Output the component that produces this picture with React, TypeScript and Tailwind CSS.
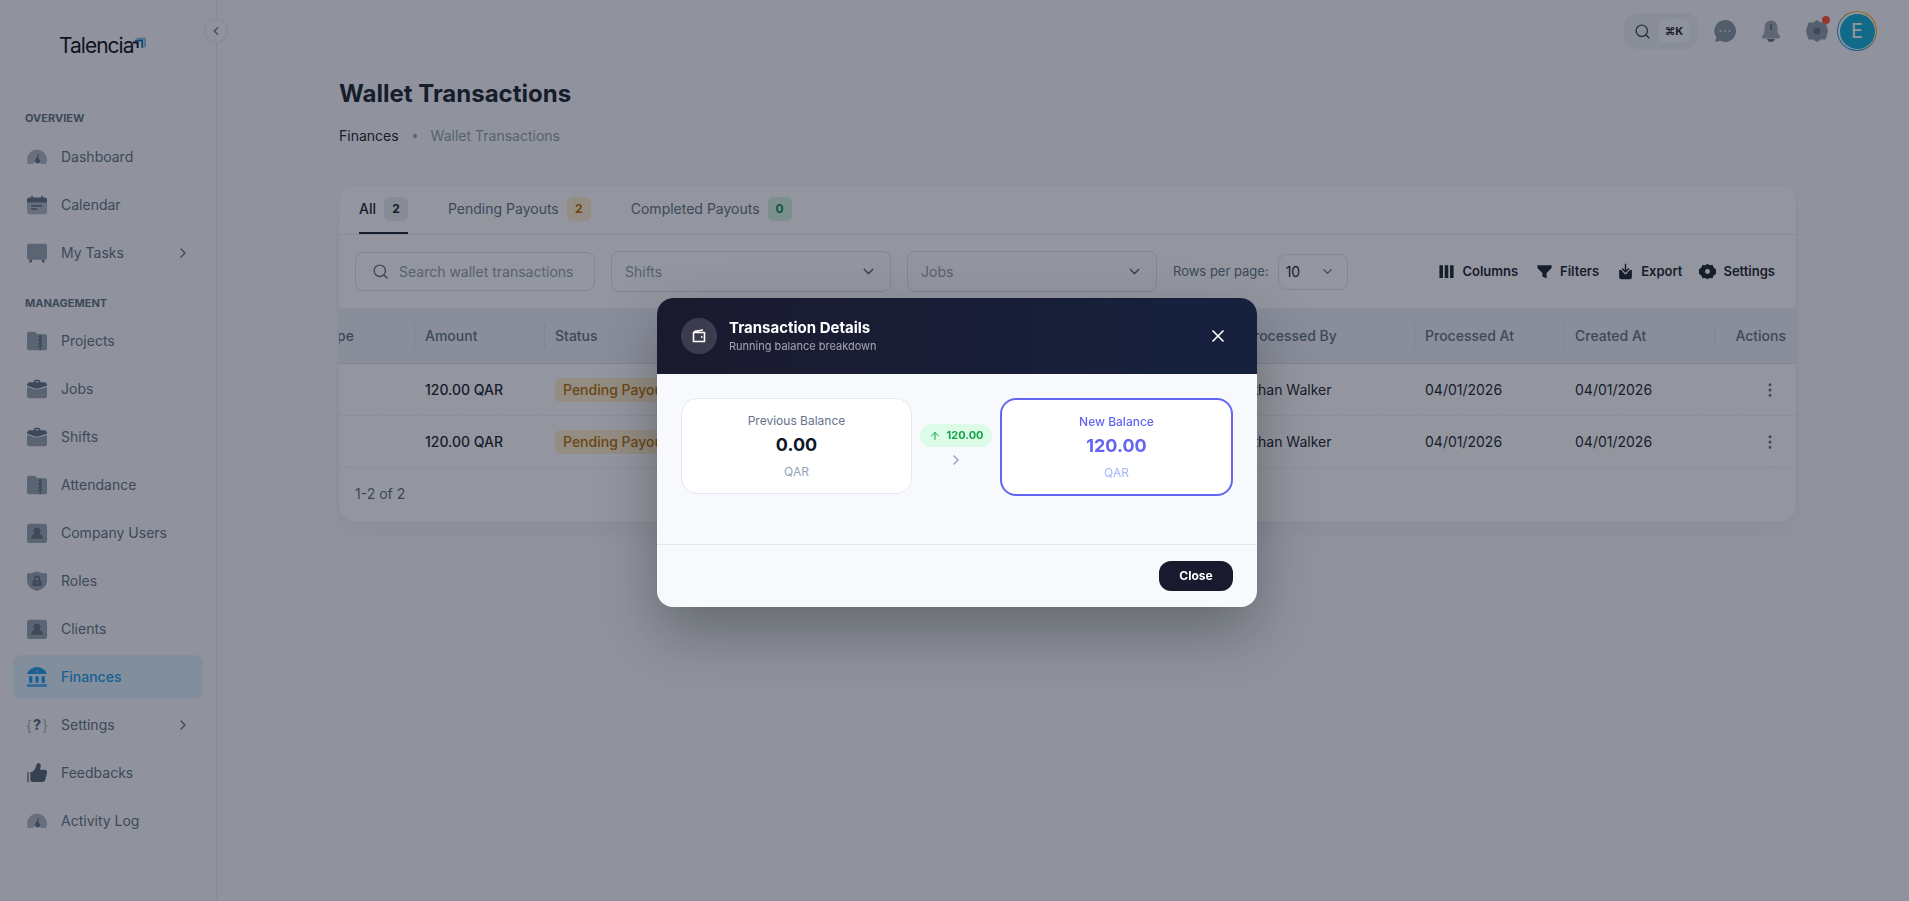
import type { ReactNode } from 'react';
import { ArrowUp, ChevronDown, ChevronLeft, ChevronRight, EllipsisVertical, Search, X } from 'lucide-react';

const Icon = ({ children, className = 'text-[#637381]' }: { children: ReactNode; className?: string }) => (
  <svg viewBox="0 0 24 24" fill="currentColor" className={`h-5 w-5 shrink-0 ${className}`}>{children}</svg>
);

const Gauge = () => (
  <Icon>
    <path opacity=".48" d="M12 3a12 12 0 0 0-12 12c0 2 .6 4 1.4 5.4h6.2a4.5 4.5 0 0 1 8.8 0h6.2A12 12 0 0 0 24 15 12 12 0 0 0 12 3Z" />
    <path d="M14.4 6.5 13.6 14a3 3 0 1 1-3.6 1.6Z" />
  </Icon>
);
const Calendar = () => (
  <Icon>
    <path opacity=".48" d="M0 8h24v12a3 3 0 0 1-3 3H3a3 3 0 0 1-3-3Z" />
    <path d="M3 3h2V1h2v2h10V1h2v2h2a3 3 0 0 1 3 3v3H0V6a3 3 0 0 1 3-3ZM5 12h13v2H5Zm0 4h7v2H5Z" />
  </Icon>
);
const Board = () => (
  <Icon>
    <path opacity=".64" d="M2 1h20a2 2 0 0 1 2 2v15a2 2 0 0 1-2 2H2a2 2 0 0 1-2-2V3a2 2 0 0 1 2-2Z" />
    <path d="M3.5 20h3l-1 3.5h-3Zm14 0h3l1 3.5h-3Z" />
  </Icon>
);
const Folder = () => (
  <Icon>
    <path opacity=".64" d="M2 1h6c2 0 3 2 5 3h9a2 2 0 0 1 2 2v15a2 2 0 0 1-2 2H2a2 2 0 0 1-2-2V3a2 2 0 0 1 2-2Z" />
    <path d="M15 4h1.6v2h1.4v1.6h-1.4v2H18v1.6h-1.4v2H18v1.6h-1.4v2H18v1.6h-1.4V23H15v-3.6h-1.4v-1.6H15v-2h-1.4v-1.6H15v-2h-1.4V9.6H15v-2h-1.4V6H15Z" />
  </Icon>
);
const Briefcase = () => (
  <Icon>
    <path opacity=".64" d="M0 9.5 12 13l12-3.500V20a3 3 0 0 1-3 3H3a3 3 0 0 1-3-3Z" />
    <path d="M8 3.500C8 2 9 1 10.500 1h3C15 1 16 2 16 3.500V4h4c2.500 0 4 1.500 4 3.500v.5l-12 4L0 8v-.5C0 5.500 1.500 4 4 4h4Zm2 .5h4v-.5a.7.7 0 0 0-.7-.7h-2.600a.7.7 0 0 0-.7.7Z" />
  </Icon>
);
const User = () => (
  <Icon>
    <rect opacity=".64" y="1" width="24" height="23" rx="3" />
    <path d="M12 5.500a4.200 4.200 0 0 1 2.800 7.400c2.700.8 4.200 3 4.200 6.100H5c0-3.100 1.500-5.300 4.200-6.100A4.200 4.200 0 0 1 12 5.500Z" />
  </Icon>
);
const Shield = () => (
  <Icon>
    <path opacity=".64" d="M0 3c8 0 8-2 12-2s4 2 12 2v9c0 6-6 10.500-12 12C6 22.500 0 18 0 12Z" />
    <path d="M12 5.500a3.800 3.800 0 0 1 3.800 3.800V11h.6a1 1 0 0 1 1 1v5a1 1 0 0 1-1 1H7.600a1 1 0 0 1-1-1v-5a1 1 0 0 1 1-1h.6V9.300A3.800 3.800 0 0 1 12 5.500Zm-1.800 5.500h3.600V9.300a1.800 1.800 0 0 0-3.600 0ZM12 13a1.200 1.200 0 1 0 0 2.400 1.200 1.200 0 0 0 0-2.400Z" />
  </Icon>
);
const Bank = () => (
  <Icon className="text-[#1b9df0]">
    <path d="M12 0c4.500 0 8.500 2.500 11.500 7v1.500H.5V7C3.500 2.500 7.500 0 12 0Z" />
    <path opacity=".72" d="M0 20.500h24V24H0Z" />
    <path d="M2.500 11h4v8h-4Zm7.500 0h4v8h-4Zm7.500 0h4v8h-4Z" />
    <circle cx="12" cy="5" r="1.800" fill="#8fa9c4" />
  </Icon>
);
const Thumb = () => (
  <Icon className="text-[#546372]">
    <path opacity=".64" d="M0 11h2.500v12H0Z" />
    <path d="M4 11c3 0 5.500-3 6.500-6 .6-2 .7-4 2.300-4.800 2-.8 3.700 1 3.700 3.300 0 1.700-.7 3.200-1 4.500h5.500c2.500 0 3.500 1.800 3 3.800l-2 8c-.5 2-1.700 3-3.700 3H7c-1.800 0-3-1-3-3Z" />
  </Icon>
);
const Braces = () => (
  <span className="flex h-5 w-5 shrink-0 items-center justify-center gap-[1px] text-[15px] leading-none text-[#637381]">
    <span className="font-light opacity-70">{'{'}</span>
    <span className="font-extrabold text-[14px]">?</span>
    <span className="font-light opacity-70">{'}'}</span>
  </span>
);

const Wallet = () => (
  <svg viewBox="0 0 16 16" className="h-4 w-4" fill="none" stroke="white" strokeWidth="1.600">
    <path d="M3 3.500 12 2M2.500 4.500h11v9h-11z" strokeLinejoin="round" />
    <circle cx="10.800" cy="9" r=".9" fill="white" stroke="none" />
  </svg>
);

const navOverview = [
  { label: 'Dashboard', icon: <Gauge /> },
  { label: 'Calendar', icon: <Calendar /> },
  { label: 'My Tasks', icon: <Board />, more: true },
];
const navManagement = [
  { label: 'Projects', icon: <Folder /> },
  { label: 'Jobs', icon: <Briefcase /> },
  { label: 'Shifts', icon: <Briefcase /> },
  { label: 'Attendance', icon: <Folder /> },
  { label: 'Company Users', icon: <User /> },
  { label: 'Roles', icon: <Shield /> },
  { label: 'Clients', icon: <User /> },
  { label: 'Finances', icon: <Bank />, active: true },
  { label: 'Settings', icon: <Braces />, more: true },
  { label: 'Feedbacks', icon: <Thumb /> },
  { label: 'Activity Log', icon: <Gauge /> },
];

function NavItem({ label, icon, more, active }: { label: string; icon: ReactNode; more?: boolean; active?: boolean }) {
  return (
    <div className={`flex h-11 items-center gap-[14px] rounded-lg pl-[14px] pr-3 text-sm ${active ? 'bg-[#1b9df0]/10 font-medium text-[#1b9df0]' : 'text-[#637381]'}`}>
      {icon}
      <span className="flex-1">{label}</span>
      {more && <ChevronRight size={16} className="text-[#637381]" />}
    </div>
  );
}

function Sidebar() {
  return (
    <aside className="relative h-full w-[217px] shrink-0 border-r border-[#919eab]/20 px-[13px]">
      {/* collapse button sits over the border */}
      <div className="absolute left-[204px] top-[19px] flex h-6 w-6 items-center justify-center rounded-full border border-[#919eab]/20 bg-[#f9fafb] text-[#637381]">
        <ChevronLeft size={14} />
      </div>
      <div className="flex h-[110px] items-start pl-[46px] pt-[34px]">
        <span className="text-[21px] leading-6 tracking-[-1px] text-[#111]">Talencia</span>
        <svg viewBox="0 0 14 14" className="mt-[2px] h-[13px] w-[13px]">
          <path d="M4 2h10v10h-2V4H4Z" fill="#7cc0ee" />
          <path d="M2 4h9v9H9V6H2Z" fill="#0b6fb8" />
          <path d="M0 6h6v7H4V8H0Z" fill="#111" />
        </svg>
      </div>
      <p className="pl-3 text-[11px] font-bold leading-4 text-[#637381]">OVERVIEW</p>
      <div className="mt-[9px] flex flex-col gap-1">
        {navOverview.map((item) => <NavItem key={item.label} {...item} />)}
      </div>
      <p className="mt-[20px] pl-3 text-[11px] font-bold leading-4 text-[#637381]">MANAGEMENT</p>
      <div className="mt-[8px] flex flex-col gap-1">
        {navManagement.map((item) => <NavItem key={item.label} {...item} />)}
      </div>
    </aside>
  );
}

function TopBar() {
  return (
    <header className="flex h-[62px] items-center justify-end pr-[32px]">
      <div className="flex h-9 w-[74px] items-center gap-2 rounded-xl bg-[#919eab]/10 pl-[10px]">
        <Search size={17} className="text-[#454f5b]" />
        <span className="flex h-6 w-[30px] items-center justify-center rounded-md bg-white/60 text-[11px] font-bold text-[#1c252e]">⌘K</span>
      </div>
      <svg viewBox="0 0 24 24" className="ml-[15px] h-6 w-6 text-[#637381]" fill="currentColor">
        <path opacity=".75" d="M12 1a11 11 0 1 1-5 20.800L2 23l1.500-4.500A11 11 0 0 1 12 1Z" />
        <circle cx="7.500" cy="12" r="1" fill="#dfe3e8" /><circle cx="12" cy="12" r="1" fill="#dfe3e8" /><circle cx="16.500" cy="12" r="1" fill="#dfe3e8" />
      </svg>
      <svg viewBox="0 0 24 24" className="ml-[22px] h-6 w-6 text-[#637381]" fill="currentColor">
        <path opacity=".6" d="M12 1.500c4 0 6.500 3 6.500 7v4c0 2 2.500 3.500 2.500 5.500 0 1-1 1.500-2 1.500H5c-1 0-2-.5-2-1.500 0-2 2.500-3.500 2.500-5.500v-4c0-4 2.500-7 6.500-7Z" />
        <path d="M8 20h8c-.5 2-2 3-4 3s-3.500-1-4-3ZM11 5h2v6h-2Z" />
      </svg>
      <div className="relative ml-[22px] h-6 w-6 text-[#637381]">
        <svg viewBox="0 0 24 24" className="h-6 w-6" fill="currentColor">
          <path opacity=".7" d="m12 1 4 2.500h4.500L22 8l1 4-1 4-1.500 4.500H16L12 23l-4-2.500H3.500L2 16l-1-4 1-4 1.500-4.500H8Z" />
          <circle cx="12" cy="12" r="3.500" />
        </svg>
        <span className="absolute -right-[1px] -top-[3px] h-2 w-2 rounded-full bg-[#ff5630]" />
      </div>
      <div className="ml-[8px] flex h-10 w-10 items-center justify-center rounded-full bg-[conic-gradient(#ffab00,#ffab00_25%,#1b9df0_50%,#1b9df0_75%,#ffab00)]">
        <div className="flex h-[38px] w-[38px] items-center justify-center rounded-full bg-[#f9fafb]">
          <div className="flex h-[35px] w-[35px] items-center justify-center rounded-full bg-[#15b0d8] text-xl text-white">E</div>
        </div>
      </div>
    </header>
  );
}

function Tab({ label, count, badge, active }: { label: string; count: number; badge: string; active?: boolean }) {
  return (
    <div className={`flex h-full items-center gap-2 border-b-2 text-sm ${active ? 'border-[#1c252e] font-medium text-[#1c252e]' : 'border-transparent text-[#637381]'}`}>
      {label}
      <span className={`flex h-6 w-6 items-center justify-center rounded-md text-xs font-bold ${badge}`}>{count}</span>
    </div>
  );
}

const Tool = ({ children, label, className }: { children: ReactNode; label: string; className: string }) => (
  <div className={`flex items-center gap-[7px] text-[13px] font-semibold text-[#1c252e] ${className}`}>
    <svg viewBox="0 0 24 24" fill="currentColor" className="h-[17px] w-[17px]">{children}</svg>
    {label}
  </div>
);

function Row() {
  return (
    <div className="flex h-[52px] items-center border-b border-dashed border-[#919eab]/20 text-sm text-[#1c252e] last:border-b-0">
      <div className="w-[76px]" />
      <div className="w-[130px] pl-[10px] font-medium">120.00 QAR</div>
      <div className="w-[690px] pl-[10px]">
        <span className="inline-flex h-[24px] items-center rounded-md bg-[#ffab00]/20 px-2 text-sm font-medium text-[#b76e00]">Pending Payout</span>
      </div>
      <div className="w-[180px] pl-[10px]">Ethan Walker</div>
      <div className="w-[150px] pl-[10px]">04/01/2026</div>
      <div className="w-[150px] pl-[10px]">04/01/2026</div>
      <div className="flex flex-1 justify-end pr-[17px]"><EllipsisVertical size={18} className="text-[#637381]" /></div>
    </div>
  );
}

const HeadCell = ({ label, className }: { label: string; className: string }) => (
  <div className={`flex h-6 items-center border-r border-[#919eab]/20 pl-[10px] ${className}`}>{label}</div>
);

function TransactionsCard() {
  return (
    <section className="h-[336px] rounded-2xl bg-white shadow-[0_0_2px_rgba(145,158,171,0.2),0_12px_24px_-4px_rgba(145,158,171,0.12)]">
      <div className="flex h-[49px] gap-10 border-b border-[#919eab]/20 px-5">
        <Tab label="All" count={2} active badge="bg-[#919eab]/20 text-[#1c252e]" />
        <Tab label="Pending Payouts" count={2} badge="bg-[#ffab00]/20 text-[#b76e00]" />
        <Tab label="Completed Payouts" count={0} badge="bg-[#22c55e]/20 text-[#118d57]" />
      </div>
      <div className="flex h-[73px] items-center pl-4 pr-[21px]">
        <div className="flex h-[39px] w-[240px] items-center gap-[10px] rounded-lg border border-[#919eab]/30 pl-4 text-sm text-[#919eab]">
          <Search size={17} className="text-[#637381]" />
          Search wallet transactions
        </div>
        <div className="ml-4 flex h-[41px] w-[280px] items-center justify-between rounded-lg border border-[#919eab]/30 px-[13px] text-sm text-[#919eab]">
          Shifts <ChevronDown size={17} className="text-[#637381]" />
        </div>
        <div className="ml-4 flex h-[41px] w-[250px] items-center justify-between rounded-lg border border-[#919eab]/30 px-[13px] text-sm text-[#919eab]">
          Jobs <ChevronDown size={17} className="text-[#637381]" />
        </div>
        <span className="ml-4 text-[13px] text-[#637381]">Rows per page:</span>
        <div className="ml-[9px] flex h-9 w-[70px] items-center justify-between rounded-lg border border-[#919eab]/30 pl-[7px] pr-[12px] text-sm text-[#1c252e]">
          10 <ChevronDown size={15} className="text-[#637381]" />
        </div>
        <div className="flex flex-1 justify-end">
          <Tool label="Columns" className="mr-[18px]"><path d="M2 3h5v18H2Zm7.500 0h5v18h-5ZM17 3h5v18h-5Z" /></Tool>
          <Tool label="Filters" className="mr-[18px]"><path d="M2 3h20v4l-7 7v8l-6-3v-5L2 7Z" /></Tool>
          <Tool label="Export" className="mr-[17px]"><path d="M11 1h2v9l3-3 1.500 1.500L12 14 6.500 8.500 8 7l3 3ZM3 10h3l5 6h2l5-6h3v10a3 3 0 0 1-3 3H6a3 3 0 0 1-3-3Z" /></Tool>
          <Tool label="Settings" className=""><path d="m12 1 3 2 4-.5 1.500 3.500L24 9v6l-3.500 3-1.500 3.500-4-.5-3 2-3-2-4 .5L3.500 18 0 15V9l3.500-3L5 2.500 9 3Zm0 7.500a3.500 3.500 0 1 0 0 7 3.500 3.500 0 0 0 0-7Z" /></Tool>
        </div>
      </div>
      <div className="flex h-[56px] items-center border-b border-[#919eab]/20 bg-[#eef0f7] text-sm font-medium text-[#637381]">
        <div className="flex h-6 w-[76px] items-center justify-end overflow-hidden border-r border-[#919eab]/20 pr-[60px]"><span className="shrink-0">Type</span></div>
        <HeadCell label="Amount" className="w-[130px]" />
        <HeadCell label="Status" className="w-[690px]" />
        <HeadCell label="Processed By" className="w-[180px]" />
        <HeadCell label="Processed At" className="w-[150px]" />
        <HeadCell label="Created At" className="w-[150px]" />
        <div className="flex-1 pr-[10px] text-right">Actions</div>
      </div>
      <Row />
      <Row />
      <p className="flex h-[52px] items-center pl-4 text-sm text-[#637381]">1-2 of 2</p>
    </section>
  );
}

function BalanceCard({ label, value, tone }: { label: string; value: string; tone: 'plain' | 'accent' }) {
  const accent = tone === 'accent';
  return (
    <div className={`flex flex-1 flex-col items-center justify-center rounded-2xl bg-white ${accent ? 'h-[98px] border-2 border-[#6366f1]' : 'h-[96px] border border-[#e2e8f0]'}`}>
      <span className={`text-xs leading-5 ${accent ? 'font-medium text-[#6366f1]' : 'text-[#64748b]'}`}>{label}</span>
      <span className={`text-lg font-bold leading-7 ${accent ? 'text-[#6366f1]' : 'text-[#0f172a]'}`}>{value}</span>
      <span className={`mt-[3px] text-xs leading-5 ${accent ? 'text-[#a5b4fc]' : 'text-[#94a3b8]'}`}>QAR</span>
    </div>
  );
}

function TransactionModal() {
  return (
    <div className="fixed inset-0 flex items-center justify-center bg-[rgba(15,23,42,0.45)] pl-[5px] pt-[4px]">
      <div className="w-[600px] overflow-hidden rounded-2xl bg-[#f8f9fc] shadow-[0_25px_60px_rgba(0,0,0,0.3)]">
        <div className="flex h-[76px] items-center gap-3 bg-gradient-to-r from-[#1a1a2e] to-[#16213e] pl-6 pr-[29px]">
          <div className="flex h-9 w-9 items-center justify-center rounded-full bg-white/15"><Wallet /></div>
          <div className="flex-1">
            <p className="text-[15px] font-bold leading-5 text-white">Transaction Details</p>
            <p className="text-[11px] leading-4 text-white/60">Running balance breakdown</p>
          </div>
          <X size={20} className="text-white" />
        </div>
        <div className="flex h-[170px] items-start gap-2 px-6 pt-6">
          <BalanceCard label="Previous Balance" value="0.00" tone="plain" />
          <div className="flex w-[72px] shrink-0 flex-col items-center pt-[26px]">
            <span className="flex h-[23px] w-[72px] items-center justify-center gap-[6px] rounded-full bg-[#dcfce7] text-[11px] font-bold text-[#16a34a]">
              <ArrowUp size={12} /> 120.00
            </span>
            <ChevronRight size={16} className="mt-[5px] text-[#94a3b8]" />
          </div>
          <BalanceCard label="New Balance" value="120.00" tone="accent" />
        </div>
        <div className="flex h-[63px] items-center justify-end border-t border-[#e2e8f0] pr-6">
          <button className="h-[30px] w-[74px] rounded-xl bg-[#1a1a2e] text-xs font-bold text-white">Close</button>
        </div>
      </div>
    </div>
  );
}

export default function App() {
  return (
    <div className="flex h-[901px] w-full overflow-hidden bg-[#f9fafb] [font-family:Inter,sans-serif]">
      <Sidebar />
      <main className="flex-1">
        <TopBar />
        <div className="pl-[122px] pr-[113px]">
          <h1 className="mt-4 text-2xl font-bold leading-8 text-[#1c252e]">Wallet Transactions</h1>
          <div className="mt-[14px] flex h-6 items-center text-sm text-[#1c252e]">
            Finances
            <span className="mx-[14px] h-1 w-1 rounded-full bg-[#919eab]" />
            <span className="text-[#919eab]">Wallet Transactions</span>
          </div>
          <div className="mt-[38px]"><TransactionsCard /></div>
        </div>
      </main>
      <TransactionModal />
    </div>
  );
}
